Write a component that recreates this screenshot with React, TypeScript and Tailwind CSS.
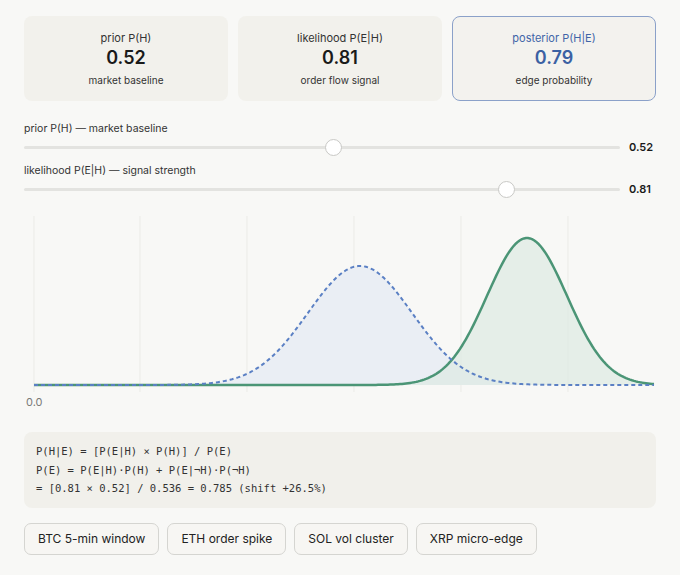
import React from "react";

const SX0 = 10;
const SX1 = 631;
const BASE = 173;

function curvePath(mu: number, sigma: number, amp: number) {
  const pts: string[] = [];
  for (let x = SX0; x <= SX1; x += 2) {
    const y = BASE - amp * Math.exp(-((x - mu) * (x - mu)) / (2 * sigma * sigma));
    pts.push(`${x},${y.toFixed(2)}`);
  }
  return pts;
}

function Chart() {
  const blue = curvePath(336, 52, 119);
  const green = curvePath(503, 40, 147);
  const grid = [10, 116, 223, 330, 437, 544];
  return (
    <svg width="632" height="200" viewBox="0 0 632 200" className="block">
      {grid.map((g) => (
        <line key={g} x1={g} y1={4} x2={g} y2={180} stroke="#ebebe7" strokeWidth={1} />
      ))}
      <path d={`M${SX0},${BASE} L${blue.join(" L")} L${SX1},${BASE} Z`} fill="#e9edf3" fillOpacity={0.95} />
      <path d={`M${SX0},${BASE} L${green.join(" L")} L${SX1},${BASE} Z`} fill="#dde9e2" fillOpacity={0.7} />
      <path d={`M${green.join(" L")}`} fill="none" stroke="#4b9576" strokeWidth={2.5} strokeLinejoin="round" />
      <path d={`M${blue.join(" L")}`} fill="none" stroke="#5b80c4" strokeWidth={2} strokeDasharray="4 3" strokeLinejoin="round" />
      <text x={2} y={194} fontSize={11} fill="#7a7a78" fontFamily="Inter, sans-serif">0.0</text>
    </svg>
  );
}

function Card({ label, value, sub, active }: { label: string; value: string; sub: string; active?: boolean }) {
  return (
    <div
      className={
        active
          ? "h-[85px] rounded-[8px] bg-[#f3f2ee] border border-[#8ba1c9] flex flex-col items-center justify-center"
          : "h-[85px] rounded-[8px] bg-[#f2f1ec] flex flex-col items-center justify-center"
      }
    >
      <div className={active ? "text-[11px] leading-[14px] text-[#3f65a8]" : "text-[11px] leading-[14px] text-[#333]"}>{label}</div>
      <div className={active ? "text-[18px] leading-[20px] font-semibold text-[#3b61a3] mt-[3px]" : "text-[18px] leading-[20px] font-semibold text-[#1a1a1a] mt-[3px]"}>{value}</div>
      <div className="text-[10px] leading-[14px] text-[#333] mt-[5px]">{sub}</div>
    </div>
  );
}

function Slider({ label, pct, value }: { label: string; pct: number; value: string }) {
  return (
    <div>
      <div className="text-[10.5px] leading-[16px] text-[#333]">{label}</div>
      <div className="flex items-center gap-[9px] h-[20px]">
        <div className="relative flex-1 h-[3px] rounded-full bg-[#e3e3e0]">
          <div
            className="absolute top-1/2 w-[17px] h-[17px] -ml-[8.5px] -mt-[8.5px] rounded-full bg-white border border-[#c9c9c6]"
            style={{ left: `${pct}%` }}
          />
        </div>
        <div className="w-[27px] text-[11px] font-semibold text-[#1a1a1a]">{value}</div>
      </div>
    </div>
  );
}

export default function App() {
  return (
    <div className="w-[680px] h-[575px] bg-[#f8f8f6] px-6 pt-4 font-['Inter',sans-serif] overflow-hidden">
      <div className="grid grid-cols-3 gap-[10px]">
        <Card label="prior P(H)" value="0.52" sub="market baseline" />
        <Card label="likelihood P(E|H)" value="0.81" sub="order flow signal" />
        <Card label="posterior P(H|E)" value="0.79" sub="edge probability" active />
      </div>
      <div className="mt-[20px] flex flex-col gap-[6px]">
        <Slider label="prior P(H) — market baseline" pct={52} value="0.52" />
        <Slider label="likelihood P(E|H) — signal strength" pct={81} value="0.81" />
      </div>
      <div className="mt-[13px]">
        <Chart />
      </div>
      <div className="mt-[20px] rounded-[8px] bg-[#f1f0eb] px-3 py-[10px] font-['DejaVu_Sans_Mono',monospace] text-[10.5px] leading-[18.5px] text-[#333]">
        <div>P(H|E) = [P(E|H) × P(H)] / P(E)</div>
        <div>P(E) = P(E|H)·P(H) + P(E|¬H)·P(¬H)</div>
        <div>= [0.81 × 0.52] / 0.536 = 0.785 (shift +26.5%)</div>
      </div>
      <div className="mt-[15px] flex gap-2">
        {["BTC 5-min window", "ETH order spike", "SOL vol cluster", "XRP micro-edge"].map((b) => (
          <div
            key={b}
            className="h-[32px] px-[13px] flex items-center rounded-[7px] border border-[#d5d5d1] bg-[#f7f6f3] text-[12px] text-[#222]"
          >
            {b}
          </div>
        ))}
      </div>
    </div>
  );
}
